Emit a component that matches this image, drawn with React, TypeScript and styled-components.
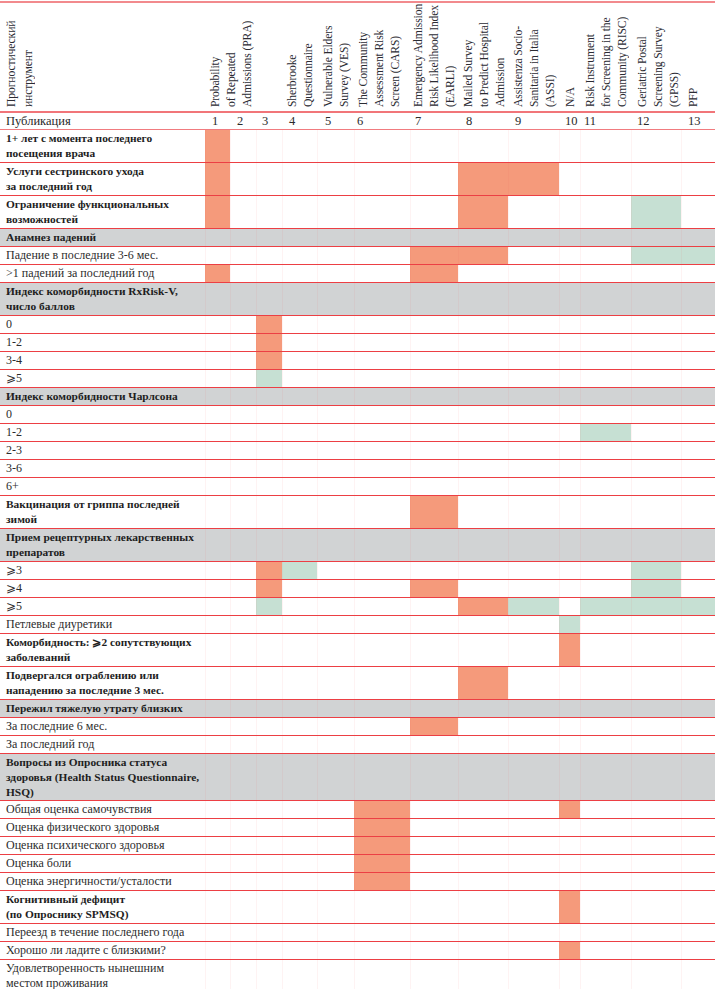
import React from "react";
import styled, { createGlobalStyle } from "styled-components";

const GlobalStyle = createGlobalStyle`
  html, body { margin: 0; padding: 0; background: #ffffff; }
  body { font-family: "Liberation Serif", "DejaVu Serif", serif; color: #2a2a2a; }
`;

const COLS = [25, 26, 26, 35, 37, 56, 48, 50, 51, 21, 51, 50, 34];
const TEMPLATE = `205px ${COLS.map((c) => `${c}px`).join(" ")}`;

const ORANGE = "#f59a7b";
const GREEN = "#c6e0d3";
const GRAY = "#d1d3d4";
const LINE = "#ec3f44";

const Page = styled.div`
  width: 715px;
  padding-top: 1px;
`;

const Table = styled.div`
  width: 715px;
  border-top: 2px solid #f28a8d;
`;

const HeaderRow = styled.div`
  display: grid;
  grid-template-columns: ${TEMPLATE};
  height: 108px;
  border-bottom: 2px solid #f17579;
`;

const HeaderCell = styled.div<{ $span?: number; $pad?: number }>`
  grid-column: span ${(p) => p.$span ?? 1};
  box-sizing: border-box;
  height: 108px;
  padding: 0 0 4px ${(p) => p.$pad ?? 3}px;
  min-width: 0;
`;

const VerticalText = styled.div<{ $lh?: number }>`
  writing-mode: vertical-rl;
  transform: rotate(180deg);
  white-space: nowrap;
  font-size: 11.7px;
  letter-spacing: -0.15px;
  line-height: ${(p) => p.$lh ?? 16}px;
  color: #2b2b33;
  height: 104px;
  width: max-content;
`;

const PubRow = styled.div`
  display: grid;
  grid-template-columns: ${TEMPLATE};
  border-bottom: 1px solid #f17b7f;
  font-size: 12.5px;
  line-height: 16px;
`;

const PubLabel = styled.div`
  padding-left: 6px;
`;

const PubNum = styled.div<{ $pad: number }>`
  padding-left: ${(p) => p.$pad}px;
`;

const Row = styled.div<{ $group: boolean }>`
  display: grid;
  grid-template-columns: ${TEMPLATE};
  background: ${(p) => (p.$group ? GRAY : "#ffffff")};
  border-bottom: 1px solid ${LINE};
`;

const Label = styled.div<{ $bold: boolean; $lines: number }>`
  padding: 1px 0 ${(p) => (p.$lines >= 3 ? 0 : 1)}px 6px;
  font-size: ${(p) => (p.$bold ? "11.4px" : "12px")};
  line-height: 15px;
  font-weight: ${(p) => (p.$bold ? 700 : 400)};
  color: ${(p) => (p.$bold ? "#1e1e1e" : "#2c2c2c")};
  white-space: nowrap;
`;

const DataCell = styled.div<{ $fill?: "o" | "g" }>`
  background: ${(p) => (p.$fill === "o" ? ORANGE : p.$fill === "g" ? GREEN : "transparent")};
  border-left: 1px solid rgba(236, 80, 84, 0.07);
`;

type Kind = "bold" | "group" | "plain";
type RowDef = { label: string[]; kind: Kind; fills?: Record<number, "o" | "g"> };

const ROWS: RowDef[] = [
  { label: ["1+ лет с  момента последнего", "посещения врача"], kind: "bold", fills: { 1: "o" } },
  { label: ["Услуги сестринского ухода", "за  последний год"], kind: "bold", fills: { 1: "o", 8: "o", 9: "o" } },
  { label: ["Ограничение функциональных", "возможностей"], kind: "bold", fills: { 1: "o", 8: "o", 12: "g" } },
  { label: ["Анамнез падений"], kind: "group" },
  { label: ["Падение в последние 3-6 мес."], kind: "plain", fills: { 7: "o", 8: "o", 12: "g", 13: "g" } },
  { label: [">1 падений за последний год"], kind: "plain", fills: { 1: "o", 7: "o" } },
  { label: ["Индекс коморбидности RxRisk-V,", "число баллов"], kind: "group" },
  { label: ["0"], kind: "plain", fills: { 3: "o" } },
  { label: ["1-2"], kind: "plain", fills: { 3: "o" } },
  { label: ["3-4"], kind: "plain", fills: { 3: "o" } },
  { label: ["⩾5"], kind: "plain", fills: { 3: "g" } },
  { label: ["Индекс коморбидности Чарлсона"], kind: "group" },
  { label: ["0"], kind: "plain" },
  { label: ["1-2"], kind: "plain", fills: { 11: "g" } },
  { label: ["2-3"], kind: "plain" },
  { label: ["3-6"], kind: "plain" },
  { label: ["6+"], kind: "plain" },
  { label: ["Вакцинация от гриппа последней", "зимой"], kind: "bold", fills: { 7: "o" } },
  { label: ["Прием рецептурных лекарственных", "препаратов"], kind: "group" },
  { label: ["⩾3"], kind: "plain", fills: { 3: "o", 4: "g", 12: "g" } },
  { label: ["⩾4"], kind: "plain", fills: { 3: "o", 7: "o", 12: "g" } },
  { label: ["⩾5"], kind: "plain", fills: { 3: "g", 8: "o", 9: "g", 11: "g", 12: "g", 13: "g" } },
  { label: ["Петлевые диуретики"], kind: "plain", fills: { 10: "g" } },
  { label: ["Коморбидность: ⩾2 сопутствующих", "заболеваний"], kind: "bold", fills: { 10: "o" } },
  { label: ["Подвергался ограблению или", "нападению за последние 3 мес."], kind: "bold", fills: { 8: "o" } },
  { label: ["Пережил тяжелую утрату близких"], kind: "group" },
  { label: ["За последние 6 мес."], kind: "plain", fills: { 7: "o" } },
  { label: ["За последний год"], kind: "plain" },
  {
    label: ["Вопросы из Опросника статуса", "здоровья (Health Status Questionnaire,", "HSQ)"],
    kind: "group",
  },
  { label: ["Общая оценка самочувствия"], kind: "plain", fills: { 6: "o", 10: "o" } },
  { label: ["Оценка физического здоровья"], kind: "plain", fills: { 6: "o" } },
  { label: ["Оценка психического здоровья"], kind: "plain", fills: { 6: "o" } },
  { label: ["Оценка боли"], kind: "plain", fills: { 6: "o" } },
  { label: ["Оценка энергичности/усталости"], kind: "plain", fills: { 6: "o" } },
  { label: ["Когнитивный дефицит", "(по Опроснику SPMSQ)"], kind: "bold", fills: { 10: "o" } },
  { label: ["Переезд в течение последнего года"], kind: "plain" },
  { label: ["Хорошо ли ладите с близкими?"], kind: "plain", fills: { 10: "o" } },
  { label: ["Удовлетворенность нынешним", "местом проживания"], kind: "plain" },
];

type HeadDef = { lines: string[]; span?: number; pad?: number };

const HEADS: HeadDef[] = [
  { lines: ["Probability", "of Repeated", "Admissions (PRA)"], span: 2, pad: 3 },
  { lines: [] },
  { lines: ["Sherbrooke", "Questionnaire"], pad: 3 },
  { lines: ["Vulnerable Elders", "Survey (VES)"], pad: 4 },
  { lines: ["The Community", "Assessment Risk", "Screen (CARS)"], pad: 2 },
  { lines: ["Emergency Admission", "Risk Likelihood Index", "(EARLI)"], pad: 1 },
  { lines: ["Mailed Survey", "to Predict Hospital", "Admission"], pad: 3 },
  { lines: ["Assistenza Socio-", "Sanitaria in Italia", "(ASSI)"], pad: 3 },
  { lines: ["N/A"], pad: 4 },
  { lines: ["Risk Instrument", "for Screening in the", "Community (RISC)"], pad: 3 },
  { lines: ["Geriatric Postal", "Screening Survey", "(GPSS)"], pad: 4 },
  { lines: ["PFP"], pad: 5 },
];

const PUB_PADS = [7, 7, 6, 7, 8, 3, 5, 8, 7, 6, 4, 6, 7];

export default function App() {
  return (
    <Page>
      <GlobalStyle />
      <Table>
        <HeaderRow>
          <HeaderCell $pad={3}>
            <VerticalText $lh={17}>
              Прогностический
              <br />
              инструмент
            </VerticalText>
          </HeaderCell>
          {HEADS.map((h, i) => (
            <HeaderCell key={i} $span={h.span} $pad={h.pad}>
              {h.lines.length > 0 && (
                <VerticalText>
                  {h.lines.map((l, j) => (
                    <React.Fragment key={j}>
                      {j > 0 && <br />}
                      {l}
                    </React.Fragment>
                  ))}
                </VerticalText>
              )}
            </HeaderCell>
          ))}
        </HeaderRow>
        <PubRow>
          <PubLabel>Публикация</PubLabel>
          {PUB_PADS.map((p, i) => (
            <PubNum key={i} $pad={p}>
              {i + 1}
            </PubNum>
          ))}
        </PubRow>
        {ROWS.map((r, i) => (
          <Row key={i} $group={r.kind === "group"}>
            <Label $bold={r.kind !== "plain"} $lines={r.label.length}>
              {r.label.map((l, j) => (
                <React.Fragment key={j}>
                  {j > 0 && <br />}
                  {l}
                </React.Fragment>
              ))}
            </Label>
            {COLS.map((_, c) => (
              <DataCell key={c} $fill={r.fills?.[c + 1]} />
            ))}
          </Row>
        ))}
      </Table>
    </Page>
  );
}
